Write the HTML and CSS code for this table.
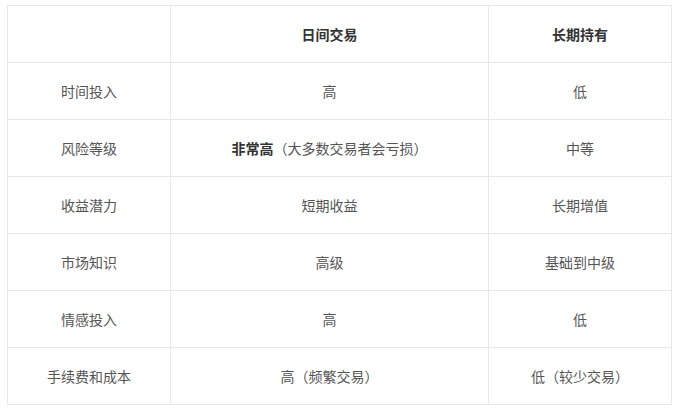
FILE: index.html
```html
<!DOCTYPE html>
<html lang="zh">
<head>
<meta charset="utf-8">
<link rel="stylesheet" href="styles.css">
</head>
<body>
<table class="cmp">
  <colgroup>
    <col class="c1"><col class="c2"><col class="c3">
  </colgroup>
  <thead>
    <tr><th></th><th>日间交易</th><th>长期持有</th></tr>
  </thead>
  <tbody>
    <tr><td>时间投入</td><td>高</td><td>低</td></tr>
    <tr><td>风险等级</td><td><strong>非常高</strong>（大多数交易者会亏损）</td><td>中等</td></tr>
    <tr><td>收益潜力</td><td>短期收益</td><td>长期增值</td></tr>
    <tr><td>市场知识</td><td>高级</td><td>基础到中级</td></tr>
    <tr><td>情感投入</td><td>高</td><td>低</td></tr>
    <tr><td>手续费和成本</td><td>高（频繁交易）</td><td>低（较少交易）</td></tr>
  </tbody>
</table>
</body>
</html>
```
FILE: styles.css
```css
html, body {
  margin: 0;
  background: #fff;
}
body {
  padding: 5px 7px;
  font-family: "Noto Sans CJK SC", "Noto Sans", sans-serif;
  font-size: 14px;
  color: #555;
}
.cmp {
  border-collapse: collapse;
  width: 664px;
  table-layout: fixed;
}
.c1 { width: 163px; }
.c2 { width: 318px; }
.c3 { width: 183px; }
.cmp th, .cmp td {
  border: 1px solid #e8e8ec;
  height: 56px;
  padding: 0;
  text-align: center;
  vertical-align: middle;
  line-height: 20px;
}
.cmp th {
  font-weight: bold;
  color: #333;
}
.cmp strong {
  color: #333;
}
```
